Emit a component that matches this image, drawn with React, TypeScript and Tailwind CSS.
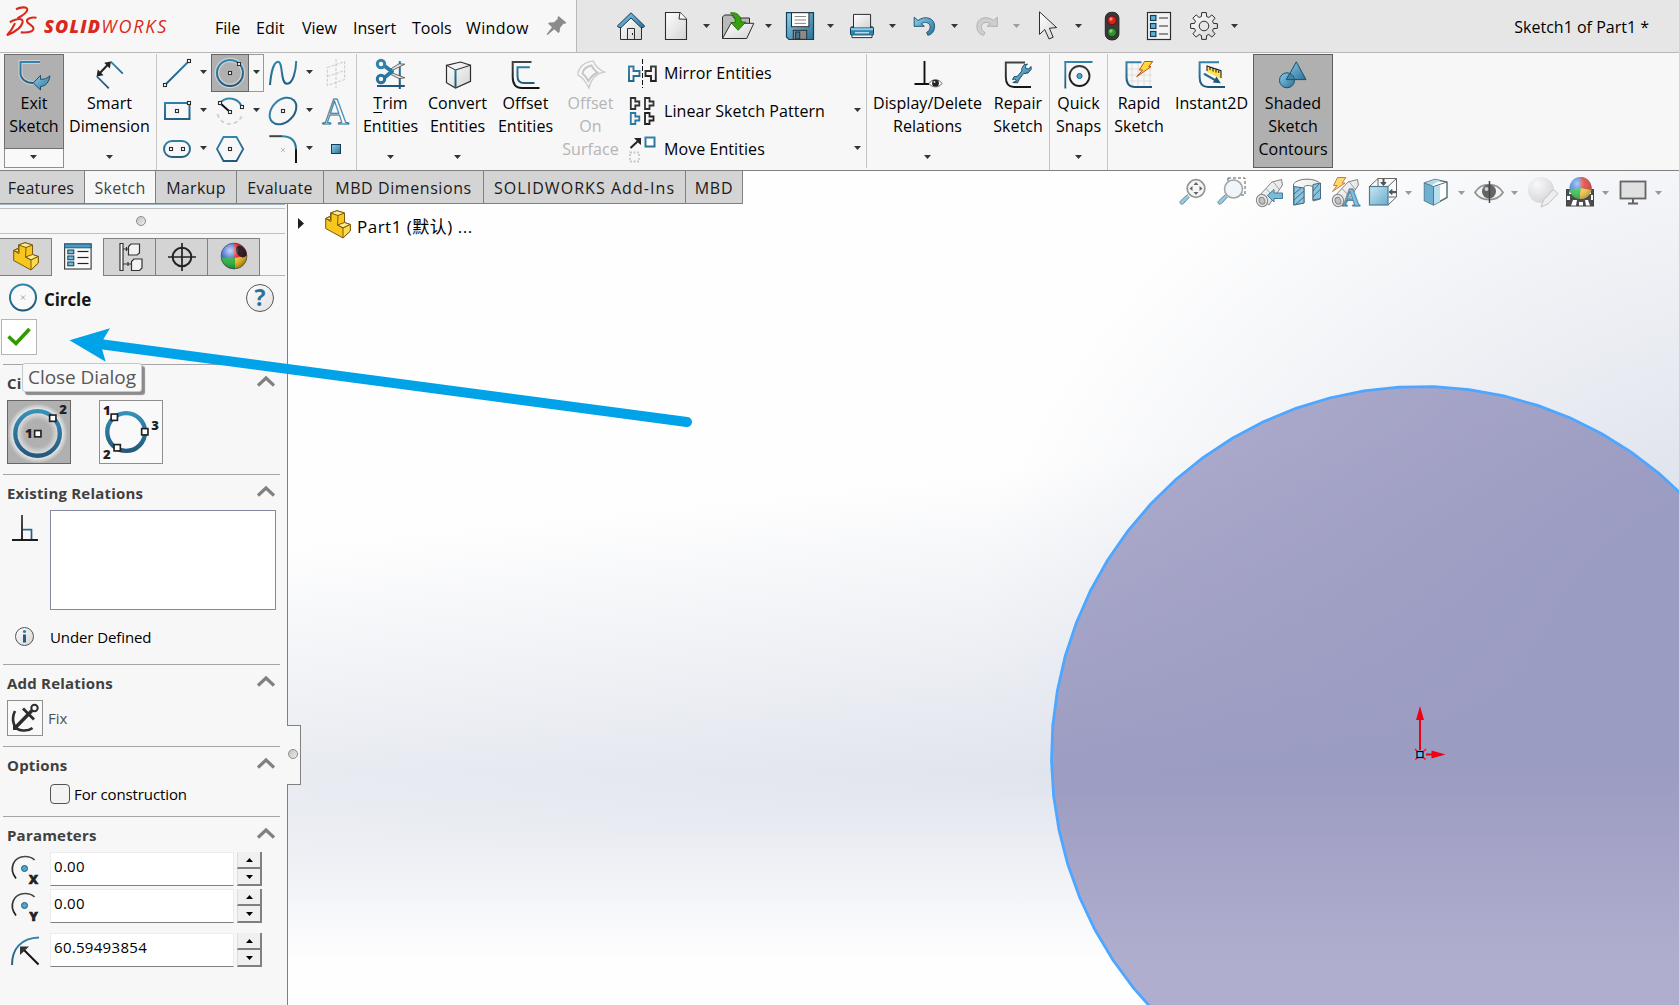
import type { ReactNode } from "react";

const INK = "#2d2d2d";
const BLUE = "url(#blue)";
const DARK = "url(#dark)";

function Defs() {
  return (
    <svg width="0" height="0" className="absolute">
      <defs>
        <linearGradient id="blue" gradientUnits="userSpaceOnUse" x1="0" y1="0" x2="6" y2="32">
          <stop offset="0" stopColor="#3590b8" />
          <stop offset="1" stopColor="#205475" />
        </linearGradient>
        <linearGradient id="dark" gradientUnits="userSpaceOnUse" x1="0" y1="0" x2="0" y2="32">
          <stop offset="0" stopColor="#4a4a4a" />
          <stop offset="1" stopColor="#111" />
        </linearGradient>
        <linearGradient id="steel" x1="0" y1="0" x2="1" y2="1">
          <stop offset="0" stopColor="#8fcdea" />
          <stop offset="1" stopColor="#2a7198" />
        </linearGradient>
        <linearGradient id="ring" x1="0" y1="0" x2="0" y2="1">
          <stop offset="0" stopColor="#3590b8" />
          <stop offset="1" stopColor="#245a7c" />
        </linearGradient>
        <linearGradient id="paper" x1="0" y1="0" x2="1" y2="1">
          <stop offset="0" stopColor="#fff" />
          <stop offset="1" stopColor="#d4d4d4" />
        </linearGradient>
        <linearGradient id="pale" x1="0" y1="0" x2="1" y2="1">
          <stop offset="0" stopColor="#c5e5f3" />
          <stop offset="1" stopColor="#5aa5c8" />
        </linearGradient>
        <radialGradient id="glow">
          <stop offset="0.45" stopColor="#b0b0b0" />
          <stop offset="0.78" stopColor="#f2f2f2" />
          <stop offset="1" stopColor="#b0b0b0" />
        </radialGradient>
        <radialGradient id="orb" cx="0.35" cy="0.3" r="0.7">
          <stop offset="0" stopColor="#fff" stopOpacity="0.75" />
          <stop offset="0.5" stopColor="#fff" stopOpacity="0.1" />
          <stop offset="1" stopColor="#000" stopOpacity="0.3" />
        </radialGradient>
        <radialGradient id="grayOrb" cx="0.35" cy="0.3" r="0.75">
          <stop offset="0" stopColor="#fafafa" />
          <stop offset="1" stopColor="#bfbfbf" />
        </radialGradient>
      </defs>
    </svg>
  );
}

function Icon({ s = 32, children }: { s?: number; children: ReactNode }) {
  return (
    <svg width={s} height={s} viewBox={`0 0 ${s} ${s}`} fill="none" className="shrink-0 overflow-visible">
      {children}
    </svg>
  );
}

function Node({ x, y }: { x: number; y: number }) {
  return <rect x={x - 1.5} y={y - 1.5} width="3" height="3" fill="#fff" stroke={INK} strokeWidth="1.1" />;
}

function Caret({ color = "#333638" }: { color?: string }) {
  return (
    <svg width="7" height="4" viewBox="0 0 7 4" className="shrink-0">
      <path d="M0 0H7L3.5 4Z" fill={color} />
    </svg>
  );
}

/* ---------- title bar ---------- */

function Logo() {
  return (
    <svg width="34" height="34" viewBox="0 0 34 34" fill="none" stroke="#da291c" strokeWidth="2.1" className="shrink-0">
      <path d="M11 4.300C15 2.200 22.800 1 22.300 4.800C21.800 8 17 10.800 12.500 13.200" />
      <path d="M4.800 17.200C9 15 13 13.600 15.800 14.200C19.500 15.200 17 20.500 13.500 23.600C10.500 26.200 6 28.700 2 30.200C5 27.200 8 23 10 18.200" strokeLinejoin="bevel" />
      <path d="M31.500 12.800C26 12 21.600 13.400 22 16.200C22.600 19.400 29.200 20.400 28.400 24C27.600 27.200 22.500 27.800 15.800 27.400" />
    </svg>
  );
}

function gearPath() {
  const pts: string[] = [];
  for (let i = 0; i < 8; i++) {
    const base = (i * Math.PI) / 4;
    for (const [off, r] of [[-0.27, 9.8], [-0.17, 13.6], [0.17, 13.6], [0.27, 9.8]]) {
      pts.push(`${(16 + r * Math.sin(base + off)).toFixed(2)} ${(16 - r * Math.cos(base + off)).toFixed(2)}`);
    }
  }
  return `M${pts.join("L")}Z`;
}

const home = (
  <Icon>
    <path d="M5.5 15.5V29.5H26.5V15.5L16 6Z" fill="url(#paper)" stroke={INK} />
    <path d="M12.5 29V18.5H19.5V29" stroke={INK} />
    <path d="M17.5 23v2" stroke={INK} />
    <path d="M2.3 16L16 2.8L29.7 16L28.2 17.6H26L16 8L6 17.6H3.8Z" fill="url(#steel)" stroke="#123f57" />
  </Icon>
);
const page = (
  <Icon>
    <path d="M5.5 2.5H20L26.5 9.3V29.5H5.5Z" fill="url(#paper)" stroke={INK} strokeWidth="1.1" />
    <path d="M20 2.5L19 9L26.5 9.3" fill="#fff" stroke={INK} />
  </Icon>
);
const open = (
  <Icon>
    <path d="M.5 28.5V7L2.5 5H10L12 8H27.5V13" fill="#b9b9b9" stroke={INK} />
    <path d="M.5 28.5L9 13.3H31.8L24.7 28.5Z" fill="url(#paper)" stroke={INK} />
    <path d="M8.3 3C14 1.5 19 5 19.4 12H23.8L16.2 20.3L8.8 12.5H13.2C13.4 8 12 5 8.3 3Z" fill="#37a10f" stroke="#1c6403" strokeWidth=".8" />
  </Icon>
);
const save = (
  <Icon>
    <path d="M2.5 2.7H29.5V29.5H5L2.5 27Z" fill="url(#steel)" stroke="#123f57" strokeWidth="1.2" />
    <rect x="7.5" y="2.7" width="17.4" height="14" fill="#fff" stroke={INK} />
    <path d="M10.5 6.5H22M10.5 10H22M10.5 13.4H22" stroke="#888" />
    <rect x="9.3" y="20.3" width="13.4" height="9" fill="#8a8a8a" stroke={INK} />
    <rect x="11.7" y="22" width="4" height="6.8" fill="#3c7da0" stroke={INK} />
  </Icon>
);
const printer = (
  <Icon>
    <rect x="4.500" y="16.800" width="23" height="8.500" rx="1.500" fill="#2f84ae" stroke="#123f57" />
    <path d="M7.5 4.4H24.6V18H7.5Z" fill="url(#paper)" stroke={INK} />
    <path d="M5 19.200H27" stroke="#8fcdea" strokeWidth="2" />
    <path d="M9 22.700H23" stroke="#b5dcec" strokeWidth="1.500" />
    <path d="M6 25.5V27.6H26V25.5" fill="#fff" stroke={INK} />
  </Icon>
);
const undoShape = "M6.2 7.2L10 10.5C17 5 27 8 26.6 16.5C26.4 21.5 23.5 25 19.8 25.2L18.6 22.5C22 20.5 22.8 17 21.5 14.6C19.7 11.8 15.5 12 13.2 13.8L16.4 16.2L6.2 16.4Z";
const undo = <Icon><path d={undoShape} fill="url(#steel)" stroke="#1f5a7a" /></Icon>;
const redo = (
  <Icon>
    <g transform="translate(33.5 0) scale(-1 1)"><path d={undoShape} fill="#cfcfcf" stroke="#b0b0b0" /></g>
  </Icon>
);
const cursor = (
  <Icon>
    <path d="M7.5 1.8V24.4L12.8 19.5L17 29L21.2 27.2L17.4 18.2L24.7 17.6Z" fill="url(#paper)" stroke={INK} />
  </Icon>
);
const traffic = (
  <Icon>
    <rect x="9.3" y="2.3" width="13.6" height="27.6" rx="6" fill="#3a3a3a" stroke="#222" />
    <circle cx="16" cy="10.3" r="4.4" fill="#d8231a" stroke="#6e0c06" /><circle cx="15" cy="9" r="1.7" fill="#f2857e" />
    <circle cx="16" cy="22.3" r="4.4" fill="#2f9132" stroke="#0d430f" /><circle cx="15" cy="21" r="1.7" fill="#87c489" />
  </Icon>
);
const list = (
  <Icon>
    <rect x="4.5" y="2.5" width="23" height="27" fill="#f4f4f4" stroke={INK} strokeWidth="1.2" />
    {[5.5, 13.5, 21.5].map((y) => (
      <g key={y}>
        <rect x="7.5" y={y} width="5.4" height="5" fill="#5fb0d6" stroke="#123f57" strokeWidth="1.2" />
        <path d={`M16 ${y + 2.5}H25`} stroke={INK} />
      </g>
    ))}
  </Icon>
);
const gear = (
  <Icon>
    <path d={gearPath()} fill="url(#paper)" stroke={INK} strokeLinejoin="round" />
    <circle cx="16" cy="16" r="4.8" fill="#e6e6e6" stroke={INK} />
  </Icon>
);

function TitleBar() {
  const quick: [ReactNode, string][] = [
    [page, "#333638"], [open, "#333638"], [save, "#333638"], [printer, "#333638"],
    [undo, "#333638"], [redo, "#9d9d9d"], [cursor, "#333638"],
  ];
  return (
    <header className="flex h-[53px] border-b border-[#b9b9b9] bg-[#f7f7f7]">
      <div className="flex w-[577px] items-center border-r border-[#b9b9b9] pl-[5px]">
        <div className="-mt-[8px] w-[39px]"><Logo /></div>
        <div className="flex w-[171px] items-baseline text-[18px] leading-[30px] text-[#da291c] italic">
          <span className="font-extrabold tracking-[1.2px]">SOLID</span>
          <span className="tracking-[1.8px]">WORKS</span>
        </div>
        <nav className="flex pt-[3px] leading-[24px]">
          <span className="w-[41px]">File</span>
          <span className="w-[45px]">Edit</span>
          <span className="w-[52px] pl-px">View</span>
          <span className="w-[59px]">Insert</span>
          <span className="w-[53px]">Tools</span>
          <span className="w-[81px] pl-px tracking-[0.4px]">Window</span>
        </nav>
        <svg width="22" height="20" viewBox="0 0 22 20" className="shrink-0">
          <path d="M12.5 0L20.5 6.8L18.5 8L17.6 7.4L14 12L13.6 16L12.4 17L8.2 13.2L1.6 19L.6 18.2L6 11.3L2 7.4L3.4 6.4L8 6.3L12 2.6L11.4 1.4Z" fill="#8b8b8b" />
        </svg>
      </div>
      <div className="flex flex-1 items-center bg-[#e6e6e6] pl-[38px]">
        <div className="w-[45px]">{home}</div>
        {quick.map(([icon, color], i) => (
          <div key={i} className="flex w-[62px] items-center gap-[11px]">
            {icon}
            <Caret color={color} />
          </div>
        ))}
        <div className="ml-[2px] w-[47px]">{traffic}</div>
        <div className="w-[45px]">{list}</div>
        <div className="flex items-center gap-[11px]">{gear}<Caret /></div>
        <span className="mr-[30px] ml-auto pt-[2px]">Sketch1 of Part1 *</span>
      </div>
    </header>
  );
}

/* ---------- ribbon ---------- */

function Tool({ w, icon, lines, caret, muted, active }: { w: string; icon: ReactNode; lines: ReactNode[]; caret?: boolean; muted?: boolean; active?: boolean }) {
  return (
    <div className={`flex h-[114px] shrink-0 flex-col items-center ${w} ${muted ? "text-[#b4b4b4]" : "text-black"} ${active ? "border border-[#5f5f5f] bg-[#b0b0b0] pt-[3px]" : "pt-[4px]"}`}>
      {icon}
      <div className="mt-[2px] text-center leading-[23px] tracking-[0.05px] whitespace-nowrap">
        {lines.map((l, i) => <div key={i}>{l}</div>)}
      </div>
      {caret && <div className="mt-[17px]"><Caret /></div>}
    </div>
  );
}

const exitIcon = (
  <Icon>
    <path d="M22 4H2.5V15C2.5 21 8 25 15 25" stroke="#d0d0d0" strokeWidth="4" />
    <path d="M22 4H2.5V15C2.5 21 8 25 15 25" stroke={BLUE} strokeWidth="2" />
    <path d="M15.3 25L22.5 17.3V21.3C26 21.5 29 20.5 32 17.8C31 24 28 28.3 22.5 28.4V32Z" fill="url(#steel)" stroke="#1b4f6c" />
  </Icon>
);
const dimIcon = (
  <Icon>
    <path d="M2.8 18.3L14.8 30.3M16.8 3.7L28.8 15.7" stroke={BLUE} strokeWidth="1.8" />
    <path d="M5 16L14.5 6" stroke="#222" strokeWidth="2" />
    <path d="M2.600 18.500L3.800 11.500L9.500 17.200Z M17 3.500L15.800 10.500L10.200 4.800Z" fill="#222" />
  </Icon>
);
const trimIcon = (
  <Icon>
    <path d="M24.8 3V31M2 28H29.8" stroke={BLUE} strokeWidth="2" />
    <path d="M16 14.5L29.8 19.8L24 20.6L14 15.5ZM16 13L29.8 6.2L24 5.8L14 12Z" fill="#e8e8e8" stroke="#555" strokeWidth=".9" />
    <path d="M9.5 8L17 13.5L9.5 19.5" stroke="#2b7aa2" strokeWidth="4" strokeLinejoin="round" />
    <circle cx="6" cy="6" r="3.7" stroke="#2f83ad" strokeWidth="3" />
    <circle cx="6" cy="21" r="3.7" stroke="#27739b" strokeWidth="3" />
  </Icon>
);
const convertIcon = (
  <Icon>
    <path d="M4.5 7.3L18.5 4L28.5 7.3V23.3L13.5 30L4.5 24.7Z" fill="url(#paper)" stroke={INK} strokeWidth="1.2" />
    <path d="M4.5 7.3L13.5 12L28.5 7.3" stroke={INK} />
    <path d="M13.5 11.5V30" stroke={BLUE} strokeWidth="2" />
  </Icon>
);
const offsetIcon = (
  <Icon>
    <path d="M21.5 4H2.7V19C2.7 26 6 30 12 30H29.5" stroke={DARK} strokeWidth="2" />
    <path d="M19.8 9.2H7.5V18C7.5 23 10 25 14 25H24.5" stroke={BLUE} strokeWidth="2" />
  </Icon>
);
const offsetSurfaceIcon = (
  <Icon>
    <path d="M2.8 17C3 10 9 4 18.2 3C20.5 8 24 12 29.5 14C22 15.500 16 21.500 13.8 30C11.500 25 8 19.500 2.8 17Z" stroke="#c6c6c6" strokeWidth="1.2" />
    <path d="M7.500 15.500C8 11 12 8.500 16.500 7.500C18 10.500 20 13 22.500 14.500C18 16.500 15.500 19.500 13.500 23C12 20 10 17.500 7.500 15.500Z" stroke="#c6c6c6" strokeWidth="2" />
  </Icon>
);
const relationsIcon = (
  <Icon>
    <path d="M12.5 3V26M2.5 26H17" stroke="#111" strokeWidth="1.9" />
    <path d="M17 25.500C20 20.500 27 20.500 30 25.500C27 30 20 30 17 25.500Z" fill="#fff" stroke="#666" />
    <circle cx="23.500" cy="25.200" r="3.400" fill="#222" />
    <circle cx="22.500" cy="24" r="1" fill="#ddd" />
  </Icon>
);
const repairIcon = (
  <Icon>
    <path d="M23 4.500H3.800V19C3.800 26 6.500 29 12 29H29" stroke={DARK} strokeWidth="1.900" />
    <path d="M10.800 24.500L15.500 24.800L17.300 21.200L21.500 15.600L26 15L29.200 11.300L29 8.500L26.500 11L23.800 10.500L23.500 8L25.500 6L22 6.800L19.800 10.500L19.800 13L15.600 18.200L12 18.800L10.500 21.500L13 21L14.500 23Z" fill="url(#steel)" stroke="#1b4f6c" strokeLinejoin="round" />
  </Icon>
);
const snapsIcon = (
  <Icon>
    <path d="M1.500 4H29.500" stroke={BLUE} strokeWidth="2" />
    <path d="M2.300 3V30.500" stroke={BLUE} strokeWidth="1.800" />
    <circle cx="16.500" cy="18" r="10" stroke={DARK} strokeWidth="1.900" />
    <circle cx="16.500" cy="18" r="2.600" fill="#4fa6cf" stroke="#1f6288" />
  </Icon>
);
const rapidIcon = (
  <Icon>
    <path d="M9 5V30M15 5V30M21 12V30M27 10V30M2 11H29M2 17H29M2 23H29" stroke="#dedede" />
    <path d="M18.500 4.300H3.500V19C3.500 26 6.500 29 12 29H29" stroke={BLUE} strokeWidth="2" />
    <path d="M21.500 3.500H29.700L25.700 8.700H28L13.700 18.700L19.700 12H16.300Z" fill="#ffd83a" stroke="#b5531a" strokeLinejoin="round" />
  </Icon>
);
const instantIcon = (
  <Icon>
    <path d="M23 4.300H3.600V19C3.600 26 6.500 29 12 29H29" stroke={BLUE} strokeWidth="2" />
    <path d="M11 8L25 12.700V20.700L11 13.700Z" fill="#ffe14d" />
    <path d="M11 13V8L25 12.700V20M14 9V12M17 10V13.500M20 11V14.500M22.700 12V15" stroke="#222" strokeWidth="1.100" />
    <path d="M8 15.700L20 22.600" stroke={BLUE} strokeWidth="2.200" />
    <path d="M24.800 25.300L16.800 24.500L20.500 18.500Z" fill="#1f5a7a" />
  </Icon>
);
const shadedIcon = (
  <Icon>
    <circle cx="10" cy="22.300" r="7.500" fill="url(#steel)" stroke="#1b4f6c" />
    <path d="M19.300 3.800L29 21.600H9.500Z" fill="url(#steel)" stroke="#1b4f6c" />
    <path d="M9.600 21.600C10.500 18.500 12 17 13 15.400C15.500 16.500 17.300 19 17.500 21.600Z" fill="#3c86ab" stroke="#1b4f6c" strokeWidth=".8" />
  </Icon>
);

const sketchGrid: { icon: ReactNode; caret?: boolean; on?: boolean }[][] = [
  [
    { caret: true, icon: <Icon s={30}><path d="M3 27L27 3" stroke={BLUE} strokeWidth="2" /><Node x={3} y={27} /><Node x={27} y={3} /></Icon> },
    { caret: true, on: true, icon: <Icon s={30}><circle cx="15" cy="15" r="13" stroke="#d2d2d2" strokeWidth="4.500" /><circle cx="15" cy="15" r="13" stroke={BLUE} strokeWidth="2" /><Node x={15} y={15} /><Node x={24} y={6} /></Icon> },
    { caret: true, icon: <Icon s={30}><path d="M2 27C3 14 6 4 10 3.800C15.500 3.800 12 25.800 19 25.800C25 25.800 28 13 28.200 3" stroke={BLUE} strokeWidth="2" /></Icon> },
    { icon: <Icon s={30}><path d="M6.300 9.500L23.700 3.500V21.500L6.300 27.500ZM15 1V30M6.300 18.500L23.700 12.500" stroke="#c9c9c9" strokeDasharray="3 1.500" /></Icon> },
  ],
  [
    { caret: true, icon: <Icon s={30}><rect x="3" y="7" width="24.500" height="16" stroke={BLUE} strokeWidth="2" /><Node x={15} y={15} /><Node x={27} y={7} /></Icon> },
    { caret: true, icon: <Icon s={30}><path d="M2.500 18A12.700 12.700 0 0 0 27.300 18" stroke="#cfcfcf" strokeWidth="1.800" strokeDasharray="4 3" /><path d="M5 7A13 13 0 0 1 27 11" stroke={BLUE} strokeWidth="2" /><path d="M5 7L15 16" stroke="#111" strokeWidth="2" /><Node x={5} y={7} /><Node x={15} y={16} /><Node x={27} y={11} /></Icon> },
    { caret: true, icon: <Icon s={30}><ellipse cx="15" cy="15" rx="15.300" ry="11" transform="rotate(-45 15 15)" stroke={BLUE} strokeWidth="2" /><Node x={15} y={15} /></Icon> },
    { icon: <Icon s={30}><text x="14.500" y="28" textAnchor="middle" fontFamily="Liberation Serif, serif" fontSize="37" fill="#fff" stroke="#2c7396" strokeWidth="1">A</text></Icon> },
  ],
  [
    { caret: true, icon: <Icon s={30}><rect x="2" y="7" width="26" height="16" rx="8" stroke={BLUE} strokeWidth="2" /><Node x={9} y={15} /><Node x={21} y={15} /></Icon> },
    { icon: <Icon s={30}><path d="M2 15L8.500 3H21.500L28.200 15L21.500 27H8.500Z" stroke={BLUE} strokeWidth="1.800" /><Node x={15} y={15} /></Icon> },
    { caret: true, icon: <Icon s={30}><path d="M1.300 2.200H14" stroke="#444" strokeWidth="2" /><path d="M14 2.200C23 2.200 28 7 28 16" stroke={BLUE} strokeWidth="2" /><path d="M28 15.500V29" stroke="#111" strokeWidth="2" /><path d="M13 14L17 18M17 14L13 18" stroke="#b9b9b9" /></Icon> },
    { icon: <Icon s={30}><rect x="10.500" y="10.500" width="9" height="9" fill="url(#steel)" stroke="#123f57" /></Icon> },
  ],
];

const tee = "M1 1H5.500V4.500H9.500V8.500H5.500V12H1Z";

function PatternTools() {
  const rows: { icon: ReactNode; text: string; caret?: boolean }[] = [
    {
      text: "Mirror Entities",
      icon: (
        <Icon s={30}>
          <path d="M1 8.500H5.500V13H11.500V18H5.500V23H1Z" stroke={BLUE} strokeWidth="1.900" />
          <path d="M27.800 8.500H23V13H17.500V18H23V23H27.800Z" stroke={DARK} strokeWidth="1.900" />
          <path d="M14.500 1V30" stroke="#111" strokeDasharray="5 2" />
        </Icon>
      ),
    },
    {
      text: "Linear Sketch Pattern", caret: true,
      icon: (
        <Icon s={30}>
          <g strokeWidth="1.800">
            <path d={tee} transform="translate(1.800 1)" stroke="#333" />
            <path d={tee} transform="translate(16 1)" stroke="#333" />
            <path d={tee} transform="translate(1.800 16)" stroke="#2a7aa2" />
            <path d={tee} transform="translate(16 16)" stroke="#222" />
          </g>
        </Icon>
      ),
    },
    {
      text: "Move Entities", caret: true,
      icon: (
        <Icon s={30}>
          <path d="M2.500 14L9.500 7.500" stroke="#222" strokeWidth="2" />
          <path d="M13 4V11L10.500 9L8.500 6.500L6 4Z" fill="#222" />
          <rect x="17.500" y="3.500" width="9" height="9" fill="#fff" stroke={BLUE} strokeWidth="2" />
          <rect x="2" y="18.500" width="9" height="9" stroke="#c4c4c4" strokeWidth="1.800" strokeDasharray="1.800 1.800" />
        </Icon>
      ),
    },
  ];
  return (
    <div className="flex h-[114px] w-[246px] flex-col border-r border-[#c4c4c4]">
      {rows.map((r) => (
        <div key={r.text} className="flex h-[38px] items-center pr-[5px] pl-[7px]">
          {r.icon}
          <span className="ml-[6px] flex-1 pb-[1px] tracking-[0.07px]">{r.text}</span>
          {r.caret && <div className="-mt-[2px]"><Caret /></div>}
        </div>
      ))}
    </div>
  );
}

function Ribbon() {
  return (
    <section className="flex h-[118px] border-b border-[#808080] bg-[#f7f7f7] pt-px pl-[4px]">
      <div className="flex h-[114px] w-[60px] flex-col border border-[#8f8f8f] bg-[#f9f9f9]">
        <div className="-mx-px -mt-px flex h-[95px] flex-col items-center border border-[#6e6e6e] bg-[#b0b0b0] pt-[3px]">
          {exitIcon}
          <div className="mt-[2px] text-center leading-[23px]">Exit<br />Sketch</div>
        </div>
        <div className="flex flex-1 items-center justify-center pr-px pb-[2px]"><Caret /></div>
      </div>
      <div className="flex w-[93px] border-r border-[#c4c4c4]">
        <Tool w="w-[91px]" icon={dimIcon} lines={["Smart", "Dimension"]} caret />
      </div>
      <div className="flex w-[200px] flex-col border-r border-[#c4c4c4] pl-px">
        {sketchGrid.map((row, r) => (
          <div key={r} className="flex h-[38px]">
            {row.map((c, i) => (
              <div key={i} className={i === 3 ? "flex w-[38px] shrink-0" : "flex w-[53px] shrink-0"}>
                <div className={c.on ? "flex size-[38px] items-center justify-center border border-[#666] bg-[#b0b0b0]" : "flex size-[38px] items-center justify-center"}>{c.icon}</div>
                {c.caret && (
                  <div className={c.on ? "flex w-[15px] items-center justify-center border border-l-0 border-[#999] pb-[2px]" : "flex w-[15px] items-center justify-center pb-[2px]"}><Caret /></div>
                )}
              </div>
            ))}
          </div>
        ))}
      </div>
      <Tool w="w-[67px]" icon={trimIcon} lines={[<><u className="underline-offset-[3px]">T</u>rim</>, "Entities"]} caret />
      <Tool w="w-[67px]" icon={convertIcon} lines={["Convert", "Entities"]} caret />
      <Tool w="w-[69px]" icon={offsetIcon} lines={["Offset", "Entities"]} />
      <Tool w="w-[61px]" icon={offsetSurfaceIcon} lines={["Offset", "On", "Surface"]} muted />
      <PatternTools />
      <Tool w="w-[121px]" icon={relationsIcon} lines={["Display/Delete", "Relations"]} caret />
      <div className="flex w-[62px] border-r border-[#c4c4c4]"><Tool w="w-[60px]" icon={repairIcon} lines={["Repair", "Sketch"]} /></div>
      <div className="flex w-[58px] border-r border-[#c4c4c4]"><Tool w="w-[57px]" icon={snapsIcon} lines={["Quick", "Snaps"]} caret /></div>
      <Tool w="w-[62px]" icon={rapidIcon} lines={["Rapid", "Sketch"]} />
      <Tool w="w-[83px]" icon={instantIcon} lines={["Instant2D"]} />
      <Tool w="w-[80px]" icon={shadedIcon} lines={["Shaded", "Sketch", "Contours"]} active />
    </section>
  );
}

/* ---------- command tabs and view toolbar ---------- */

function CommandTabs() {
  const tabs = [
    ["Features", "w-[85px] pr-[2px] tracking-[0.2px]"], ["Sketch", "w-[71px] tracking-[0.3px]"], ["Markup", "w-[81px] tracking-[0.3px]"], ["Evaluate", "w-[87px] tracking-[0.3px]"],
    ["MBD Dimensions", "w-[160px] tracking-[0.58px]"], ["SOLIDWORKS Add-Ins", "w-[202px] tracking-[1.05px]"], ["MBD", "w-[57px] tracking-[0.8px]"],
  ];
  return (
    <div className="flex h-[33px] shrink-0 border-b border-[#808080]">
      {tabs.map(([t, w]) => (
        <div key={t} className={`flex items-center justify-center border-r border-[#808080] pt-[2px] whitespace-nowrap ${w} ${t === "Sketch" ? "bg-[#f7f7f7] text-[#444]" : "bg-[#d4d4d4] text-[#1a1a1a]"}`}>{t}</div>
      ))}
    </div>
  );
}

const tube = (
  <>
    <path d="M4 20L18 5L27.500 2.500L28.500 8L15 28Z" fill="url(#paper)" stroke="#777" strokeLinejoin="round" />
    <path d="M19 4.500L25 12M12 11.500L20 20" stroke="#999" />
    <ellipse cx="8" cy="23.500" rx="5.600" ry="6.200" fill="#e4e4e4" stroke="#777" transform="rotate(-20 8 23.500)" />
    <ellipse cx="8" cy="23.800" rx="2.800" ry="3.500" fill="#bbb" stroke="#777" transform="rotate(-20 8 23.800)" />
  </>
);

function ViewToolbar() {
  const items: { icon: ReactNode; caret?: boolean }[] = [
    { icon: <Icon s={30}><path d="M9.500 17.500L3 23.500C.5 25.500 3 28.500 5.500 26.500L11.500 20" fill="#8cc4de" stroke="#557f94" /><circle cx="18" cy="11.500" r="8.800" fill="#f6f6f6" stroke="#8a8a8a" strokeWidth="1.800" /><path d="M18 5L20.500 8H15.500ZM18 18L20.500 15H15.500ZM11.500 11.500L14.500 9V14ZM24.500 11.500L21.500 9V14Z" fill="#555" /></Icon> },
    { icon: <Icon s={30}><rect x="12" y="1" width="17" height="17" stroke="#444" strokeDasharray="3 2" /><path d="M9.500 17.500L3 23.500C.5 25.500 3 28.500 5.500 26.500L11.500 20" fill="#8cc4de" stroke="#557f94" /><circle cx="17.500" cy="12" r="9" fill="#eef5f8" stroke="#999" strokeWidth="1.500" /></Icon> },
    { icon: <Icon s={30}>{tube}<path d="M13.500 18.500L20 12.500V16H28.500V21.500H20V25Z" fill="#6fb4d4" stroke="#2b6f92" /></Icon> },
    { icon: <Icon s={30}><path d="M1.500 7C6 .5 24 .5 28.500 7V22L21 24V10C19 8 13 8 12 10V26L1.500 28Z" fill="url(#paper)" stroke="#666" /><path d="M2 9.500L12 11V26L2 28Z" fill="#7fbedb" stroke="#2c5f7a" /><path d="M21 7.500L28.500 6V21.500L21 23Z" fill="#7fbedb" stroke="#2c5f7a" /><path d="M2 17L9 11M2 23L12 14M4 27L12 20M21 14L27 7M21 20L28.500 12" stroke="#2c5f7a" /></Icon> },
    { icon: <Icon s={30}>{tube}<path d="M7.500 .5H16L12 6H15L2.500 14.500L7 8.500H3.500Z" fill="#ffd65a" stroke="#c4702e" /><text x="21" y="28.500" textAnchor="middle" fontFamily="Liberation Serif, serif" fontWeight="bold" fontSize="25" fill="#7ab8d6" stroke="#2b6f92" strokeWidth=".8">A</text></Icon> },
    { caret: true, icon: <Icon s={30}><path d="M10 1.500H28.500V20L20 28M1.500 9.500L10 1.500M20 9.500L28.500 1.500M10 1.500V9M20.500 20H28" stroke="#555" /><rect x="1.500" y="9.500" width="18.500" height="18.500" fill="url(#pale)" stroke="#3a6f8c" strokeWidth="1.200" /><path d="M15 2V5.500H12.800L15.500 8.500L18 5.500H16V2ZM28 14.500H24V12.500L21 15L24 17.500V15.700H28Z" fill="#444" stroke="#444" /></Icon> },
    { caret: true, icon: <Icon s={30}><path d="M3.500 6L14 2.500L26 5V20.500L12.500 28L3.500 23.500Z" fill="#fff" stroke="#4a6572" strokeWidth="1.500" /><path d="M3.500 6L12.500 9.500V28L3.500 23.500Z" fill="#5fa9cb" /><path d="M12.500 9.500L19 8V24.500L12.500 28Z" fill="#b5dcee" /><path d="M3.500 6L14 2.500L19 3.500L10 8.500Z" fill="#a8d6eb" /><path d="M3.500 6L12.500 9.500L26 5M12.500 9.500V28" stroke="#4a6572" /></Icon> },
    { caret: true, icon: <Icon s={30}><path d="M1 15.500C7 5 23 5 29 15.500C23 25 7 25 1 15.500Z" fill="#f4f4f4" stroke="#8a8a8a" strokeWidth="1.800" /><circle cx="15" cy="14.500" r="7" fill="#555" /><circle cx="12.500" cy="12" r="2" fill="#ccc" /><path d="M15.500 4V26" stroke="#333" strokeWidth="1.500" /></Icon> },
    { icon: <Icon s={30}><circle cx="14" cy="13" r="13" fill="url(#grayOrb)" opacity=".65" /><path d="M14 30L16.500 23L26.500 12.500L31 16.500L21 27Z" fill="#eee" stroke="#bdbdbd" /></Icon> },
    { caret: true, icon: <Icon s={30}><rect x="1.500" y="12.500" width="27" height="16.500" fill="#3a3a3a" stroke="#333" /><path d="M5 13H9V17H4ZM22 13H26V17H23ZM2 19H5V23H2ZM26 18H28V23H26ZM8 23H12L11 28.500H6ZM14 25H18V28.500H14ZM20 23H23L25 28.500H21Z" fill="#fff" /><circle cx="15.500" cy="11" r="11" fill="#3f7fdc" /><path d="M15.500 11V0A11 11 0 0 1 26.300 13Z" fill="#e23b36" /><path d="M15.500 11L26.400 13A11 11 0 0 1 14.500 22Z" fill="#f4c53a" /><path d="M15.500 11L14.500 22A11 11 0 0 1 4.600 12.500Z" fill="#2fbb44" /><circle cx="15.500" cy="11" r="11" fill="url(#orb)" opacity=".7" /></Icon> },
    { caret: true, icon: <Icon s={30}><rect x="2.500" y="4.500" width="25" height="17" fill="#dedede" stroke="#555" strokeWidth="1.800" /><path d="M15 22V26M10 26.500H20" stroke="#555" strokeWidth="2" /></Icon> },
  ];
  return (
    <div className="ml-auto flex h-[41px] items-center pr-[12px] opacity-90">
      {items.map((it, i) => (
        <div key={i} className="flex items-center">
          <div className="flex w-[38px] justify-center">{it.icon}</div>
          {it.caret && <div className="flex w-[15px] justify-center pt-[2px] pr-[2px]"><Caret color="#8f8f8f" /></div>}
        </div>
      ))}
    </div>
  );
}

/* ---------- property panel ---------- */

const partIcon = (
  <svg width="26" height="29" viewBox="0 0 26 29" className="shrink-0" stroke="#7a5a10" strokeLinejoin="round">
    <path d="M.7 8.500L5.500 6V3L12 .7L19.500 3V12.500L25.300 14.500V21L18 28L.7 18.500Z" fill="#f7c71e" />
    <path d="M5.500 3L12 .7L19.500 3L13 5.500ZM12.500 15L19.500 12.500L25.300 14.500L18 18ZM.7 8.500L5.500 6.500V9.500L4 10Z" fill="#fdeb90" />
    <path d="M18 18L25.300 14.500V21L18 28Z" fill="#fbdc4e" />
    <path d="M.7 8.500L6 11.500V3.200M13 5.500L12.500 15L18 18" fill="none" />
  </svg>
);

function ManagerTabs() {
  const tabs: ReactNode[] = [
    partIcon,
    <Icon s={28} key="p"><rect x=".6" y="1" width="26.500" height="25" fill="#fbfbfb" stroke="#444" strokeWidth="1.200" /><rect x=".6" y="1" width="26.500" height="3.800" fill="#4c9cc2" stroke="#1f5a7a" />{[7, 13, 19].map((y) => <g key={y}><rect x="3.800" y={y} width="6" height="3.800" fill="#6fb9da" stroke="#123f57" /><path d={`M13.500 ${y + 1.500}H24.500`} stroke="#222" strokeWidth="1.200" /></g>)}</Icon>,
    <Icon s={28} key="c"><path d="M4 .5H7V27.500H4ZM7 6H13M7 21H15M10.500 4V8M12 19V23" fill="#fff" stroke="#333" strokeWidth="1.200" /><path d="M12.500 3.500L15 1H23.500V10L21 12H12.500ZM15.500 18.500L18 16H26V25L23.500 27.500H15.500Z" fill="#f3f3f3" stroke="#333" strokeWidth="1.200" /></Icon>,
    <Icon s={28} key="d"><circle cx="14" cy="14" r="9.300" stroke="#222" strokeWidth="2" /><path d="M14 0V28M0 14H28" stroke="#222" strokeWidth="1.700" /></Icon>,
    <Icon s={28} key="e"><circle cx="14" cy="13" r="13" fill="#2c62cf" /><path d="M14 13V0A13 13 0 0 1 27 13.500L14 15Z" fill="#d3202a" /><path d="M14 15L27 13A13 13 0 0 1 15 26Z" fill="#f0bd1b" /><path d="M15 26A13 13 0 0 1 1 14.500L15 15Z" fill="#22ad38" /><ellipse cx="21" cy="8.500" rx="4.500" ry="6.500" transform="rotate(-35 21 8.500)" fill="#1d0608" /><circle cx="14" cy="13" r="13" fill="url(#orb)" stroke="#444" strokeWidth=".6" /></Icon>,
  ];
  return (
    <div className="mt-[4px] flex h-[38px] w-[285px]">
      {tabs.map((t, i) => (
        <div key={i} className={i === 1 ? "flex w-[52px] items-center justify-center border-r border-[#808080] pb-px" : "flex w-[52px] items-center justify-center border border-l-0 border-[#808080] bg-[#d4d4d4] pb-px"}>{t}</div>
      ))}
      <div className="flex-1 border-b border-[#b5b5b5]" />
    </div>
  );
}

function SectionHead({ title }: { title: string }) {
  return (
    <div className="mr-[7px] ml-[3px] flex h-[36px] items-start justify-between border-t border-[#a5a5a5] pt-[8px] pr-[5px] pl-[4px]">
      <span className="text-[15px] leading-[20px] font-bold tracking-[0.2px] text-[#404040]">{title}</span>
      <svg width="18" height="12" viewBox="0 0 18 12" className="mt-[2px]"><path d="M1 10.500L9 3L17 10.500" fill="none" stroke="#808080" strokeWidth="3.200" /></svg>
    </div>
  );
}

function Spin({ icon, value }: { icon: ReactNode; value: string }) {
  return (
    <div className="flex h-[34px] items-start pl-[10px]">
      <div className="w-[40px] pt-[2px]">{icon}</div>
      <div className="h-[34px] w-[184px] border border-[#ececec] border-b-[#808080] bg-white pt-[3px] pl-[3px] text-[15px] leading-[20px] tracking-[0.3px]">{value}</div>
      <div className="ml-[3px] flex w-[25px] flex-col">
        {["M0 4H7L3.500 0Z", "M0 0H7L3.500 4Z"].map((d) => (
          <div key={d} className="flex h-[17px] items-center justify-center border-r-2 border-b-2 border-l border-[#808080] border-l-[#ddd] bg-[#f0f0f0]">
            <svg width="7" height="4" viewBox="0 0 7 4"><path d={d} fill="#000" /></svg>
          </div>
        ))}
      </div>
    </div>
  );
}

function arcIcon(letter: string) {
  return (
    <Icon s={30}>
      <path d="M6 24.500C-2 14 4 2.500 15 2.500C19 2.500 22 3.500 24.500 6" stroke={DARK} strokeWidth="1.700" />
      <circle cx="14.500" cy="14.500" r="3" fill="#4fa6cf" stroke="#1f5a7a" />
      <text x="23.500" y="29.500" textAnchor="middle" fontSize="13" fontWeight="800" fill="#222" stroke="#222" strokeWidth=".6">{letter}</text>
    </Icon>
  );
}

function Grip() {
  return <span className="block size-[10px] rounded-full border border-[#8a8a8a] bg-linear-to-br from-[#c4c4c4] to-[#ececec]" />;
}

function PropertyPanel() {
  return (
    <aside className="relative h-[801px] w-[288px] shrink-0 border-r border-[#808080] bg-[#f7f7f7]">
      <div className="h-[5px] w-[285px] border-t border-b border-t-[#9fb4bd] border-b-[#c0c0c0]" />
      <div className="flex h-[25px] w-[285px] items-center justify-center border-b border-[#c0c0c0] pr-[3px]"><Grip /></div>
      <ManagerTabs />
      <div className="flex h-[42px] items-center pl-[8px]">
        <Icon><circle cx="15" cy="16.500" r="13" fill="#f9f9f9" stroke={BLUE} strokeWidth="2" /><path d="M13 14.500L17 18.500M17 14.500L13 18.500" stroke="#999" strokeWidth=".9" /></Icon>
        <span className="ml-[4px] pt-[5px] text-[17px] font-bold tracking-[-0.1px] text-[#151515]">Circle</span>
        <div className="mt-px mr-[13px] ml-auto flex size-[28px] items-center justify-center rounded-full border border-[#555] bg-linear-to-br from-white to-[#e2e2e2] text-[23px] font-bold text-[#2b7299]">?</div>
      </div>
      <div className="mt-[1px] ml-px flex size-[36px] items-center justify-center border border-[#b5b5b5] bg-white">
        <svg width="24" height="20" viewBox="0 0 24 20"><path d="M1.500 9.500L9 16.500L22.500 2" fill="none" stroke="#339900" strokeWidth="3.600" /></svg>
      </div>
      <div className="mt-[9px]"><SectionHead title="Circle Type" /></div>
      <div className="flex h-[74px] gap-[28px] pl-[7px]">
        <svg width="64" height="64" viewBox="0 0 64 64" className="border border-[#666] bg-[#b0b0b0]">
          <circle cx="30.500" cy="33.500" r="31" fill="url(#glow)" />
          <circle cx="30.500" cy="33.500" r="23" fill="none" stroke="url(#ring)" strokeWidth="4.500" />
          <rect x="27.500" y="30.500" width="6.500" height="6.500" fill="#fff" stroke="#222" strokeWidth="1.700" />
          <rect x="43" y="14.500" width="6.500" height="6.500" fill="#fff" stroke="#222" strokeWidth="1.700" />
          <text x="17.500" y="38.500" fontSize="13.500" fontWeight="800" fill="#222">1</text>
          <text x="53" y="13.500" fontSize="13.500" fontWeight="800" fill="#222">2</text>
        </svg>
        <svg width="64" height="64" viewBox="0 0 64 64" className="border border-[#8f8f8f] bg-[#f9f9f9]">
          <circle cx="27" cy="32" r="19.500" fill="none" stroke="url(#ring)" strokeWidth="4.500" />
          <rect x="11.500" y="13.500" width="6.500" height="6.500" fill="#fff" stroke="#222" strokeWidth="1.700" />
          <rect x="43" y="28.500" width="6.500" height="6.500" fill="#fff" stroke="#222" strokeWidth="1.700" />
          <rect x="14.500" y="45" width="6.500" height="6.500" fill="#fff" stroke="#222" strokeWidth="1.700" />
          <text x="3" y="14.500" fontSize="13.500" fontWeight="800" fill="#222">1</text>
          <text x="53" y="29.500" fontSize="13.500" fontWeight="800" fill="#222">3</text>
          <text x="3" y="60" fontSize="13.500" fontWeight="800" fill="#222">2</text>
        </svg>
      </div>
      <SectionHead title="Existing Relations" />
      <div className="flex h-[100px] pl-[10px]">
        <div className="w-[40px] pt-[3px]">
          <Icon s={30}><path d="M12 2V27" stroke={DARK} strokeWidth="1.900" /><path d="M2 27H28" stroke="#111" strokeWidth="1.900" /><path d="M13 16.700H21.500V26" stroke={BLUE} strokeWidth="1.700" /></Icon>
        </div>
        <div className="h-[100px] w-[226px] border border-[#8489a0] bg-white" />
      </div>
      <div className="flex h-[54px] items-center pl-[15px] text-[15px] tracking-[-0.1px]">
        <div className="mr-[15px] flex size-[20px] items-center justify-center">
          <svg width="20" height="20" viewBox="0 0 20 20"><circle cx="9.500" cy="9.500" r="9" fill="url(#paper)" stroke="#555" /><circle cx="9.500" cy="4.500" r="1.600" fill="#2b7fa8" /><path d="M9.500 7.500V15.500" stroke="#245f80" strokeWidth="3" /></svg>
        </div>
        Under Defined
      </div>
      <SectionHead title="Add Relations" />
      <div className="flex h-[46px] pl-[7px]">
        <div className="flex size-[36px] items-center justify-center border border-[#8f8f8f] bg-[#f9f9f9]">
          <Icon s={30}><g stroke={INK}><circle cx="24.500" cy="5" r="3.200" strokeWidth="2" /><path d="M22 7.500L5 25" strokeWidth="3.400" /><path d="M13 5.500L24 16.500" strokeWidth="2.800" /><path d="M5 8C1 16 3 27 13 27.500C17 27.800 20 27 22.500 25" strokeWidth="2.600" /></g><path d="M3 20V27H10Z" fill={INK} /></Icon>
        </div>
        <span className="ml-[5px] pt-[7px] text-[15px] leading-[22px] text-[#46525c]">Fix</span>
      </div>
      <SectionHead title="Options" />
      <div className="flex h-[34px] items-start pt-[2px] pl-[50px] text-[15px] leading-[20px]">
        <span className="mr-[4px] size-[20px] rounded-[4px] border border-[#555] bg-[#f3f3f3]" />
        <span className="tracking-[-0.1px]">For construction</span>
      </div>
      <SectionHead title="Parameters" />
      <Spin icon={arcIcon("X")} value="0.00" />
      <div className="h-[3px]" />
      <Spin icon={arcIcon("Y")} value="0.00" />
      <div className="h-[10px]" />
      <Spin
        value="60.59493854"
        icon={<Icon s={30}><path d="M2 30C2 14 11 3 29 2.500" stroke={BLUE} strokeWidth="1.900" /><path d="M14 15L28.500 29.500" stroke="#111" strokeWidth="2" /><path d="M10 11.500H19L10 20Z" fill="#333" /></Icon>}
      />

      <div className="absolute top-[521px] left-[287px] flex h-[60px] w-[14px] items-center border border-l-0 border-[#808080] bg-[#f7f7f7] pb-[2px] pl-px"><Grip /></div>
      <div className="absolute top-[159px] left-[22px] rounded-[3px] border border-[#c8c8c8] bg-[#f9f9f9] px-[5px] text-[19px] leading-[27px] tracking-[-0.05px] whitespace-nowrap text-[#575757] shadow-[3px_3px_1px_#8b8b8b]">Close Dialog</div>
    </aside>
  );
}

/* ---------- graphics area ---------- */

function circlePoints(cx: number, cy: number, r: number, n: number) {
  return Array.from({ length: n }, (_, k) => {
    const a = Math.PI * (1 - 0.7 / 180) + (k * 2 * Math.PI) / n;
    return `${(cx + r * Math.cos(a)).toFixed(1)},${(cy + r * Math.sin(a)).toFixed(1)}`;
  }).join(" ");
}

function Model() {
  const outline = circlePoints(1421, 756, 369.5, 66);
  return (
    <svg width="1679" height="834" viewBox="0 171 1679 834" className="pointer-events-none absolute inset-0">
      <polygon points={outline} fill="#120c6d" fillOpacity="0.33" stroke="none" />
      <polygon points={outline} fill="none" stroke="#4da6ff" strokeWidth="2.800" />
      <path d="M1420 750V719M1426 754.500H1436" stroke="#f00014" strokeWidth="2" />
      <path d="M1420 706L1424 720H1416ZM1445.500 754.500L1431.500 758.500V750.500Z" fill="#f00014" />
      <path d="M1415 749L1426 760M1426 749L1415 760" stroke="#f00" strokeWidth="1.200" strokeDasharray="3 1" />
      <rect x="1417" y="751.500" width="6" height="6" fill="#6db4f5" stroke="#000" strokeWidth="1.200" />
    </svg>
  );
}

function Callout() {
  return (
    <svg width="1679" height="834" viewBox="0 171 1679 834" className="pointer-events-none absolute inset-0">
      <path d="M103 344.500L687 422" stroke="#00a2e8" strokeWidth="10" strokeLinecap="round" />
      <path d="M69.500 340.300L110 328.300L103.500 339L102 349L105.700 361.700Z" fill="#00a2e8" />
    </svg>
  );
}

export default function App() {
  return (
    <div className="relative h-[1005px] w-[1679px] overflow-hidden bg-white font-['Open_Sans','Noto_Sans_CJK_SC',sans-serif] text-[16px] text-black">
      <Defs />
      <TitleBar />
      <Ribbon />
      <main className="relative h-[834px] bg-[linear-gradient(to_bottom,rgba(254,254,254,0)_600px,rgba(254,254,254,1)_790px),radial-gradient(ellipse_860px_660px_at_1830px_500px,#dfe3ec_30%,rgba(223,227,236,0)_100%),linear-gradient(174deg,#fefefe_40%,#dfe3ec_72%)]">
        <Model />
        <div className="relative flex h-[33px] items-start">
          <CommandTabs />
          <ViewToolbar />
        </div>
        <div className="relative flex">
          <PropertyPanel />
          <div className="flex h-[34px] items-start pt-[6px] pl-[10px]">
            <svg width="6" height="11" viewBox="0 0 6 11" className="mt-[8px]"><path d="M0 0L6 5.500L0 11Z" fill="#1e1e1e" /></svg>
            <div className="ml-[21px]">{partIcon}</div>
            <span className="ml-[6px] pt-[5px] text-[17px] leading-[24px] tracking-[0.5px] whitespace-nowrap">Part1 (默认) ...</span>
          </div>
        </div>
        <Callout />
      </main>
    </div>
  );
}
